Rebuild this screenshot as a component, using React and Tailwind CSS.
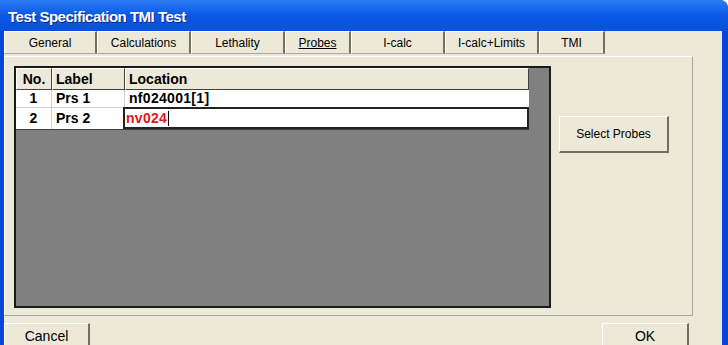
import React from "react";

const tabs = [
  { label: "General", w: 93 },
  { label: "Calculations", w: 94 },
  { label: "Lethality", w: 94 },
  { label: "Probes", w: 66, active: true },
  { label: "I-calc", w: 94 },
  { label: "I-calc+Limits", w: 94 },
  { label: "TMI", w: 66 },
];

export default function App() {
  return (
    <div
      className="w-[728px] h-[345px] overflow-hidden flex flex-col bg-[#0746d8] rounded-tr-[8px]"
      style={{ fontFamily: '"Liberation Sans", Arial, sans-serif' }}
    >
      {/* title bar */}
      <div className="h-[31px] shrink-0 flex items-center pl-[8px] pt-[2px] bg-gradient-to-b from-[#2a7cf6] via-[#0a58e6] to-[#0651dc] rounded-tr-[8px]">
        <span className="text-white font-bold text-[15px] leading-none tracking-[-0.5px] [text-shadow:1px_1px_0_#0a2a88]">
          Test Specification TMI Test
        </span>
      </div>
      {/* body */}
      <div className="flex-1 ml-[4px] mr-[6px] mb-[3px] bg-[#ece9d8] flex flex-col relative">
        {/* tabs */}
        <div className="flex h-[23px] items-stretch">
          {tabs.map((t) => (
            <div
              key={t.label}
              style={{ width: t.w }}
              className="shrink-0 flex items-center justify-center text-[12px] text-black bg-[#ece9d8] border-t border-l border-t-white border-l-white border-r-[2px] border-r-[#716f64] border-b border-b-[#aca899]"
            >
              <span className={t.active ? "underline" : ""}>{t.label}</span>
            </div>
          ))}
        </div>
        {/* tab panel */}
        <div className="mt-[2px] w-[689px] h-[260px] border border-[#aca899] border-l-white border-t-white flex pt-[9px] pl-[9px]">
          {/* grid */}
          <div className="w-[537px] h-[242px] border-[2px] border-[#1a1a1a] bg-[#808080] flex flex-col">
            {/* header */}
            <div className="flex h-[22px] text-[14px] font-bold text-black">
              <div className="w-[36px] bg-[#ece9d8] border-t border-l border-white border-r border-b border-r-[#404040] border-b-[#404040] flex items-center justify-center">
                No.
              </div>
              <div className="w-[73px] bg-[#ece9d8] border-t border-l border-white border-r border-b border-r-[#404040] border-b-[#404040] flex items-center pl-[3px]">
                Label
              </div>
              <div className="w-[404px] bg-[#ece9d8] border-t border-l border-white border-r border-b border-r-[#404040] border-b-[#404040] flex items-center pl-[3px]">
                Location
              </div>
            </div>
            {/* row 1 */}
            <div className="flex h-[18px] w-[513px] bg-white text-[14px] font-bold text-black border-b border-[#d4d0c8]">
              <div className="w-[36px] flex items-center justify-center border-r border-[#d4d0c8]">1</div>
              <div className="w-[73px] flex items-center pl-[4px] border-r border-[#d4d0c8]">Prs 1</div>
              <div className="w-[404px] flex items-center pl-[4px] tracking-[0.3px]">nf024001[1]</div>
            </div>
            {/* row 2 */}
            <div className="flex h-[22px] w-[513px] bg-white text-[14px] font-bold text-black border-b border-[#404040]">
              <div className="w-[36px] flex items-center justify-center border-r border-[#d4d0c8]">2</div>
              <div className="w-[71px] flex items-center pl-[4px]">Prs 2</div>
              <div className="w-[406px] -mt-[1px] h-[22px] border-[2px] border-[#222] bg-white flex items-center pl-[1px]">
                <span className="text-[#e8141c] tracking-[0.3px]">nv024</span>
                <span className="w-[1px] h-[15px] bg-black ml-[1px]" />
              </div>
            </div>
          </div>
          {/* right side */}
          <div className="pl-[8px] pt-[50px]">
            <div className="w-[110px] h-[37px] flex items-center justify-center text-[12px] text-black bg-[#ece9d8] border border-t-white border-l-white border-r-[2px] border-b-[2px] border-r-[#716f64] border-b-[#716f64]">
              Select Probes
            </div>
          </div>
        </div>
        {/* bottom buttons */}
        <div className="flex justify-between mt-[7px] w-[685px]">
          <div className="w-[86px] h-[22px] flex items-start pt-[2px] justify-center text-[14px] text-black border-t border-l border-t-white border-l-white border-r-[2px] border-r-[#716f64]">
            Cancel
          </div>
          <div className="w-[87px] h-[22px] flex items-start pt-[2px] justify-center text-[14px] text-black border-t border-l border-t-white border-l-white border-r-[2px] border-r-[#716f64]">
            OK
          </div>
        </div>
      </div>
    </div>
  );
}
